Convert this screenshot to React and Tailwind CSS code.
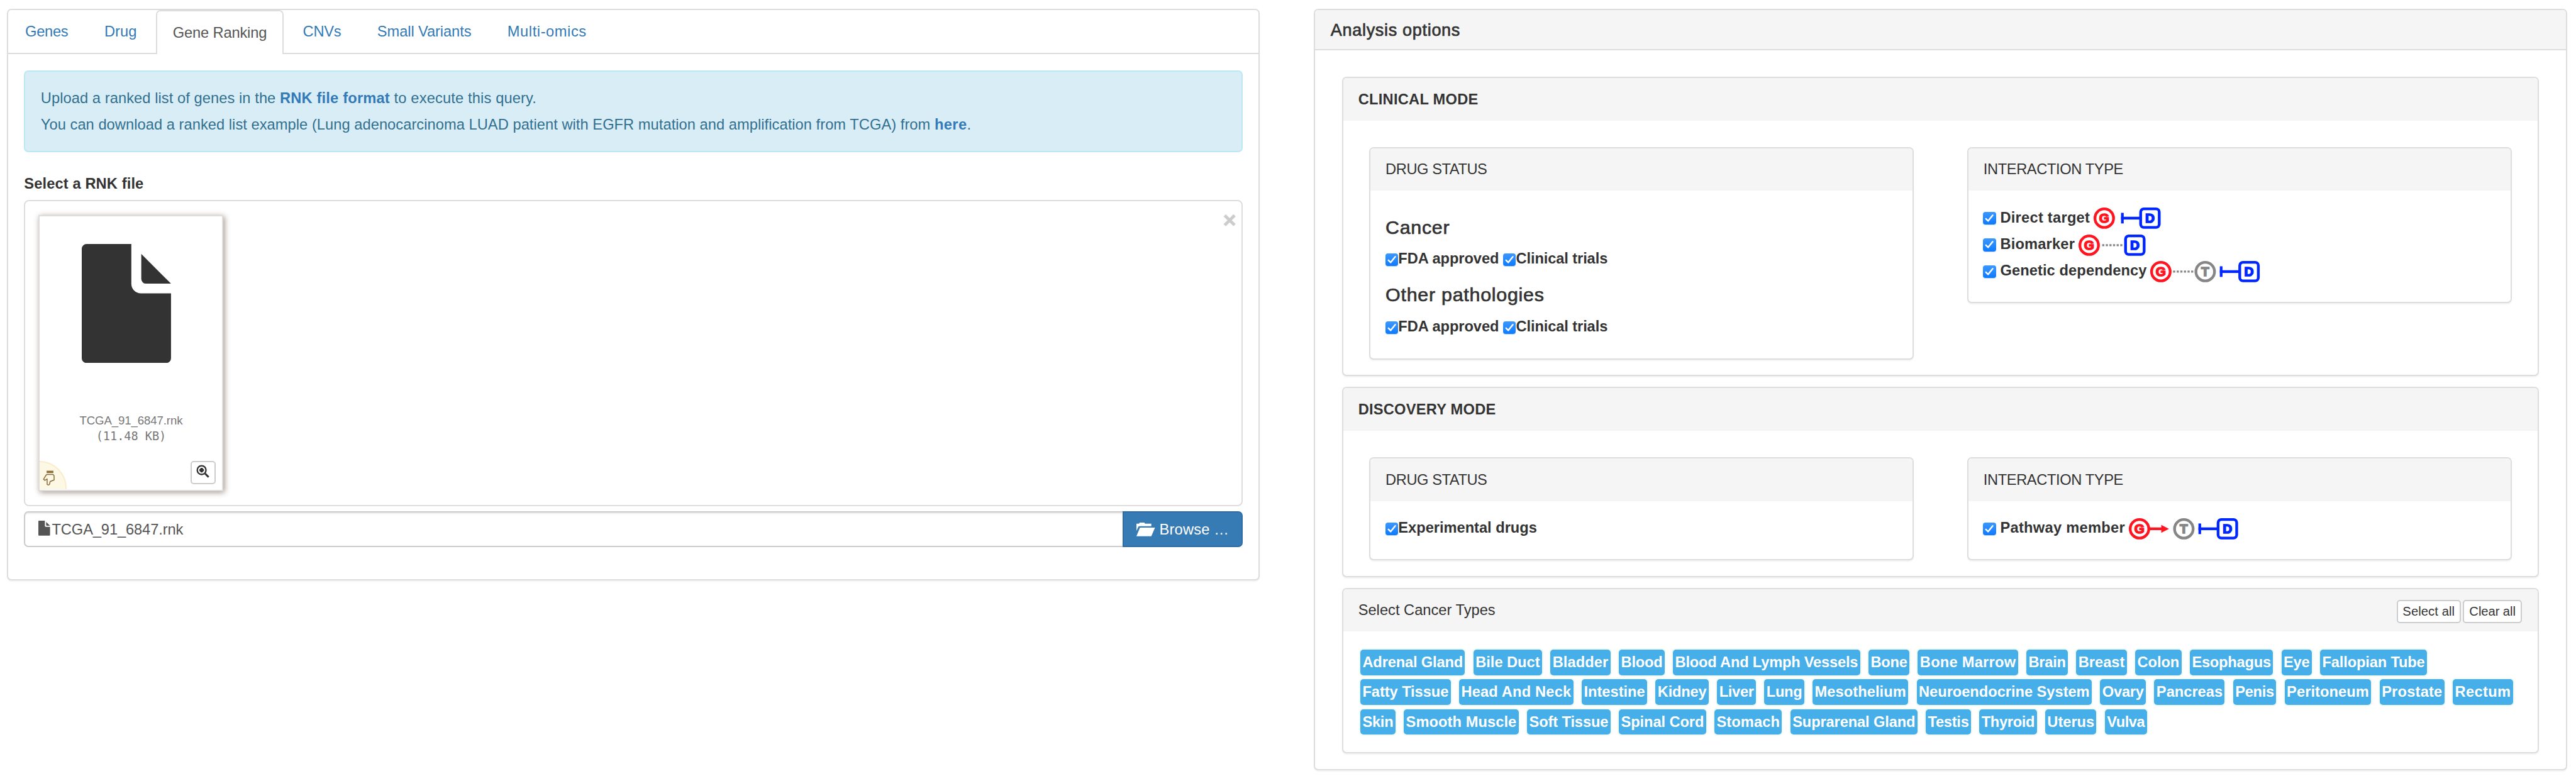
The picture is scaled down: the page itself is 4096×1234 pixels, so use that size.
import { useLayoutEffect, useRef, useState } from "react";

// One design unit in CSS pixels; the same value feeds Tailwind's --spacing below.
const UNIT = 0.84488;

// Tracks a label so that it spans exactly `w` design units.
function Fit({ w, children, className = "" }) {
  const ref = useRef(null);
  const [spacing, setSpacing] = useState(0);
  useLayoutEffect(() => {
    const natural = ref.current.getBoundingClientRect().width;
    setSpacing((w * UNIT - natural) / String(children).length);
  }, []);
  return (
    <span ref={ref} className={`inline-block whitespace-pre ${className}`} style={{ letterSpacing: `${spacing}px` }}>
      {children}
    </span>
  );
}

function Tab({ w, active, children }) {
  return (
    <div
      className={
        active
          ? "mr-4 -mb-[2px] flex items-center rounded-t-[7px] border-2 border-b-0 border-[#ddd] bg-white px-29.5 text-[#555]"
          : "mr-4 flex items-center px-32 text-[#337ab7]"
      }
    >
      <Fit w={w}>{children}</Fit>
    </div>
  );
}

function FileGlyph({ className }) {
  return (
    <svg viewBox="0 0 168 224" preserveAspectRatio="none" className={className} fill="currentColor">
      <path d="M9 0H93.3V75a18 18 0 0 0 18 18H168V215a9 9 0 0 1-9 9H9a9 9 0 0 1-9-9V9a9 9 0 0 1 9-9z" />
      <path d="M112 18.6L168 74.7H121a9 9 0 0 1-9-9z" />
    </svg>
  );
}

function HandDown() {
  return (
    <svg viewBox="62 129 70 88" className="mt-16 ml-6 h-29 w-23" fill="none" stroke="#8a6d3b" strokeWidth="5.5" strokeLinejoin="round">
      <path d="M84 137.5H123" strokeWidth="13" />
      <path d="M86 152H121L127 160V184L104 193L101 208Q94 216 87 209V178L74 186L66.5 180L80 157Z" />
    </svg>
  );
}

function ZoomIn() {
  return (
    <svg viewBox="932 101 76 76" className="h-25 w-25" fill="none" stroke="#333">
      <circle cx="963" cy="132" r="25" strokeWidth="8.5" />
      <path d="M983 152L1003 172" strokeWidth="11" />
      <path d="M950 132H976M963 119V145" strokeWidth="12" />
      <rect x="954" y="123" width="18" height="18" rx="2" fill="#333" stroke="none" />
    </svg>
  );
}

function FolderOpen() {
  return (
    <svg viewBox="300 247 105 78" className="h-26 w-35" fill="#fff">
      <path d="M300 253H315L318 247H345L348 253H384V267H316L311 270L300 294Z" />
      <path d="M320 275H405L384 324H300Z" />
    </svg>
  );
}

function Check() {
  return (
    <span className="h-24 w-24 shrink-0 rounded-[4px] bg-gradient-to-b from-[#3a98ff] to-[#0a7aff] shadow-[0_1px_1px_rgba(0,90,220,0.25)]">
      <svg viewBox="0 0 24 24" className="h-24 w-24" fill="none" stroke="#fff" strokeWidth="2.9" strokeLinecap="round" strokeLinejoin="round">
        <path d="M5.6 12.8L9.8 17L18.4 6.2" />
      </svg>
    </span>
  );
}

function Letter({ x, color, children }) {
  return (
    <text x={x} y="28.9" textAnchor="middle" fill={color} stroke={color} strokeWidth="2" fontSize="24.5" fontWeight="bold">
      {children}
    </text>
  );
}

const RED = "#ff1420";
const GRAY = "#868686";
const BLUE = "#0027ff";

function Gene() {
  return (
    <g>
      <circle cx="20" cy="20" r="17.5" fill="none" stroke={RED} strokeWidth="5.2" />
      <Letter x="20" color={RED}>G</Letter>
    </g>
  );
}

function Target({ x }) {
  return (
    <g transform={`translate(${x} 0)`}>
      <circle cx="20" cy="20" r="17.5" fill="none" stroke={GRAY} strokeWidth="5.2" />
      <Letter x="20" color={GRAY}>T</Letter>
    </g>
  );
}

// Inhibition bar that starts at `bar` and runs into the drug box at `x`.
function Drug({ x, bar }) {
  return (
    <g>
      {bar !== undefined && (
        <g fill={BLUE}>
          <rect x={bar} y="10" width="5" height="20" />
          <rect x={bar} y="17.4" width={x - bar + 2} height="5.2" />
        </g>
      )}
      <rect x={x + 2.5} y="2.5" width="35" height="35" rx="6" fill="none" stroke={BLUE} strokeWidth="5.2" />
      <Letter x={x + 20} color={BLUE}>D</Letter>
    </g>
  );
}

function Dots({ x }) {
  return <path d={`M${x} 20h38`} stroke="#868686" strokeWidth="4" strokeDasharray="4 2.8" />;
}

function Diagram({ w, children }) {
  return (
    <svg viewBox={`0 0 ${w} 40`} width={w * UNIT} className="ml-7 h-40 shrink-0 overflow-visible">
      {children}
    </svg>
  );
}

function Interaction({ label, w, dw, children }) {
  return (
    <div className="flex h-50 items-center">
      <Check />
      <Fit w={w} className="ml-8 pb-3 font-bold">{label}</Fit>
      <Diagram w={dw}>{children}</Diagram>
    </div>
  );
}

function Option({ label, w }) {
  return (
    <span className="mr-8 flex items-center">
      <Check />
      <Fit w={w} className="pb-4 font-bold">{label}</Fit>
    </span>
  );
}

function Panel({ title, w, bold, className, actions, children }) {
  return (
    <section className={`rounded-[7px] border-2 border-[#ddd] bg-white shadow-[0_2px_2px_rgba(0,0,0,0.05)] ${className}`}>
      <header className="flex h-80 items-center justify-between rounded-t-[5px] bg-[#f5f5f5] pl-28.5 pr-30">
        <Fit w={w} className={bold ? "font-bold" : ""}>{title}</Fit>
        {actions}
      </header>
      {children}
    </section>
  );
}

function SmallButton({ w, className, children }) {
  return (
    <button className={`flex h-44 items-center justify-center rounded-[5px] border-2 border-[#ccc] bg-white text-[20.28px] ${className}`}>
      <Fit w={w}>{children}</Fit>
    </button>
  );
}

const TYPES = [
  [["Adrenal Gland", 189], ["Bile Duct", 121], ["Bladder", 105], ["Blood", 78], ["Blood And Lymph Vessels", 344], ["Bone", 69], ["Bone Marrow", 180.5], ["Brain", 70], ["Breast", 87], ["Colon", 79], ["Esophagus", 148.5], ["Eye", 49], ["Fallopian Tube", 193]],
  [["Fatty Tissue", 162], ["Head And Neck", 207], ["Intestine", 115], ["Kidney", 92], ["Liver", 65], ["Lung", 67], ["Mesothelium", 172], ["Neuroendocrine System", 321.5], ["Ovary", 78], ["Pancreas", 124.5], ["Penis", 73], ["Peritoneum", 155], ["Prostate", 114], ["Rectum", 105]],
  [["Skin", 58], ["Smooth Muscle", 208], ["Soft Tissue", 149], ["Spinal Cord", 156], ["Stomach", 119], ["Suprarenal Gland", 231], ["Testis", 77], ["Thyroid", 100], ["Uterus", 88.5], ["Vulva", 71]],
];

function QueryPanel() {
  return (
    <section className="h-1076 w-2358 shrink-0 rounded-[7px] border-2 border-[#ddd] bg-white shadow-[0_2px_2px_rgba(0,0,0,0.05)]">
      <nav className="flex h-84 border-b-2 border-[#ddd]">
        <Tab w={81}>Genes</Tab>
        <Tab w={61}>Drug</Tab>
        <Tab w={177} active>Gene Ranking</Tab>
        <Tab w={72}>CNVs</Tab>
        <Tab w={177}>Small Variants</Tab>
        <Tab w={149}>Multi-omics</Tab>
      </nav>
      <div className="px-30 pt-30">
        <div className="flex h-154 flex-col justify-center rounded-[7px] border-2 border-[#bce8f1] bg-[#d9edf7] pl-29 text-[#31708f]">
          <p className="flex h-50 items-center">
            <Fit w={450}>{"Upload a ranked list of genes in the "}</Fit>
            <Fit w={207} className="font-bold text-[#337ab7]">RNK file format</Fit>
            <Fit w={276}>{" to execute this query."}</Fit>
          </p>
          <p className="flex h-50 items-center">
            <Fit w={1682}>{"You can download a ranked list example (Lung adenocarcinoma LUAD patient with EGFR mutation and amplification from TCGA) from "}</Fit>
            <Fit w={61} className="font-bold text-[#337ab7]">here</Fit>
            <span>.</span>
          </p>
        </div>
        <div className="flex h-90 items-center pt-30">
          <Fit w={225} className="font-bold">Select a RNK file</Fit>
        </div>
        <div className="relative h-576 rounded-[8px] border-2 border-[#ddd] pt-26 pl-25">
          <span className="absolute top-15 right-10 text-[35.5px] leading-none font-bold text-[#ccc] [-webkit-text-stroke:0.8px]">×</span>
          <div className="h-520 w-348 border-2 border-[#ddd] bg-white shadow-[2px_2px_9px_#a2958a]">
            <FileGlyph className="mt-52 ml-79 h-224 w-168" />
            <div className="mt-94 flex h-30 items-center justify-center text-[18.6px] text-[#777]">
              <Fit w={194}>TCGA_91_6847.rnk</Fit>
            </div>
            <div className="flex h-28 items-center justify-center font-['DejaVu_Sans_Mono',monospace] text-[18.6px] text-[#777]">
              <Fit w={132}>(11.48 KB)</Fit>
            </div>
            <div className="mt-32 flex items-start justify-between pr-12">
              <div className="h-54 w-50 rounded-tr-full border-t-2 border-r-2 border-[#faebcc] bg-[#fcf8e3]">
                <HandDown />
              </div>
              <button className="flex h-44 w-48 items-center justify-center rounded-[5px] border-2 border-[#ccc] bg-white pb-4">
                <ZoomIn />
              </button>
            </div>
          </div>
        </div>
        <div className="mt-10 flex h-68">
          <div className="flex grow items-center rounded-l-[7px] border-2 border-r-0 border-[#ccc] pl-25 text-[#555] shadow-[inset_0_2px_2px_rgba(0,0,0,0.075)]">
            <FileGlyph className="mb-4 h-28 w-22" />
            <Fit w={247} className="ml-3">TCGA_91_6847.rnk</Fit>
          </div>
          <button className="flex w-226 items-center rounded-r-[7px] border-2 border-[#2e6da4] bg-[#377bb5] pl-24 text-white">
            <FolderOpen />
            <Fit w={131} className="ml-8">Browse …</Fit>
          </button>
        </div>
      </div>
    </section>
  );
}

function DrugOptions() {
  return (
    <div className="flex h-62 items-center">
      <Option label="FDA approved" w={189.5} />
      <Option label="Clinical trials" w={172.5} />
    </div>
  );
}

function OptionsPanel() {
  return (
    <section className="h-1434 w-2358 shrink-0 rounded-[7px] border-2 border-[#ddd] bg-white shadow-[0_2px_2px_rgba(0,0,0,0.05)]">
      <header className="flex h-76 items-center rounded-t-[5px] border-b-2 border-[#ddd] bg-[#f5f5f5] pt-3 pl-29 text-[27.04px]">
        <Fit w={244} className="[-webkit-text-stroke:0.7px]">Analysis options</Fit>
      </header>
      <div className="flex flex-col gap-20 px-50 pt-50">
        <Panel title="CLINICAL MODE" w={226} bold className="h-564">
          <div className="flex items-start gap-100 px-49 pt-50">
            <Panel title="DRUG STATUS" w={191} className="h-400 flex-1">
              <div className="pt-39 pl-28.5">
                <h4 className="flex h-60 items-center text-[30.42px]">
                  <Fit w={121} className="[-webkit-text-stroke:0.7px]">Cancer</Fit>
                </h4>
                <DrugOptions />
                <h4 className="mt-4 flex h-60 items-center text-[30.42px]">
                  <Fit w={299} className="[-webkit-text-stroke:0.7px]">Other pathologies</Fit>
                </h4>
                <div className="pt-2">
                  <DrugOptions />
                </div>
              </div>
            </Panel>
            <Panel title="INTERACTION TYPE" w={263} className="h-294 flex-1">
              <div className="pt-27 pl-28">
                <Interaction label="Direct target" w={169} dw={126}>
                  <Gene />
                  <Drug x={86} bar={51.6} />
                </Interaction>
                <Interaction label="Biomarker" w={140.5} dw={126}>
                  <Gene />
                  <Dots x={44.5} />
                  <Drug x={86} />
                </Interaction>
                <Interaction label="Genetic dependency" w={276} dw={206}>
                  <Gene />
                  <Dots x={43} />
                  <Target x={83.5} />
                  <Drug x={166} bar={131} />
                </Interaction>
              </div>
            </Panel>
          </div>
        </Panel>
        <Panel title="DISCOVERY MODE" w={259} bold className="h-358">
          <div className="flex items-start gap-100 px-49 pt-50">
            <Panel title="DRUG STATUS" w={191} className="h-194 flex-1">
              <div className="mt-27 flex h-50 items-center pl-28.5">
                <Option label="Experimental drugs" w={261} />
              </div>
            </Panel>
            <Panel title="INTERACTION TYPE" w={263} className="h-194 flex-1">
              <div className="pt-27 pl-28">
                <Interaction label="Pathway member" w={235} dw={206}>
                  <Gene />
                  <path d="M39 17.4H61V12.6L75.5 20L61 27.4V22.6H39Z" fill={RED} />
                  <Target x={83.5} />
                  <Drug x={165.5} bar={131} />
                </Interaction>
              </div>
            </Panel>
          </div>
        </Panel>
        <Panel
          title="Select Cancer Types"
          w={258}
          className="h-312"
          actions={
            <div className="flex gap-4 pt-4">
              <SmallButton w={98} className="w-121">Select all</SmallButton>
              <SmallButton w={87} className="w-111">Clear all</SmallButton>
            </div>
          }
        >
          <div className="flex flex-col gap-8 pt-34 pl-32.5 font-bold text-white">
            {TYPES.map((row, i) => (
              <div key={i} className="flex gap-[13.42px]">
                {row.map(([name, w]) => (
                  <span key={name} className="flex h-48 items-center rounded-[5px] bg-[#46aee8] px-4 shadow-[0_0_0_2px_#edf9f1]">
                    <Fit w={w}>{name}</Fit>
                  </span>
                ))}
              </div>
            ))}
          </div>
        </Panel>
      </div>
    </section>
  );
}

export default function App() {
  return (
    <main className="flex h-1460 w-4848 items-start gap-102 overflow-hidden bg-white pt-16 pl-13 font-['Liberation_Sans',Arial,sans-serif] text-[23.66px] leading-[1.2] text-[#333] [--spacing:0.84488px]">
      <QueryPanel />
      <OptionsPanel />
    </main>
  );
}
